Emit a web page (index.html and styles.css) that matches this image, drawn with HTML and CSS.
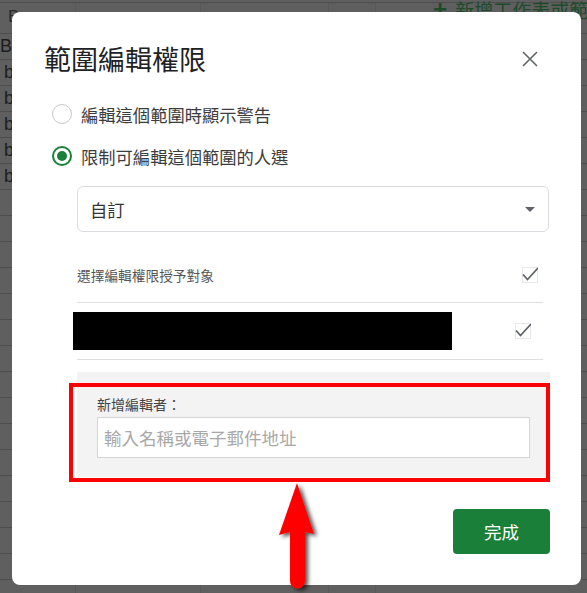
FILE: index.html
```html
<!DOCTYPE html>
<html lang="zh-Hant">
<head>
    <meta charset="UTF-8">
    <meta name="viewport" content="width=device-width, initial-scale=1.0">
    <title>範圍編輯權限</title>
    <link rel="stylesheet" href="styles.css">
</head>
<body>

    <div class="sheet">
        <div class="sheet-head">
            <div class="cell c1">B</div>
            <div class="cell c2"></div>
            <div class="cell c3"></div>
            <div class="cell c4"></div>
            <div class="add-sheet"><span class="plus">+</span>新增工作表或範圍</div>
        </div>
        <div class="row"><div class="cell c1 strong">B:</div><div class="cell c2"></div><div class="cell c3"></div><div class="cell c4"></div></div>
        <div class="row"><div class="cell c1">b</div><div class="cell c2"></div><div class="cell c3"></div><div class="cell c4"></div></div>
        <div class="row"><div class="cell c1">b</div><div class="cell c2"></div><div class="cell c3"></div><div class="cell c4"></div></div>
        <div class="row"><div class="cell c1">b</div><div class="cell c2"></div><div class="cell c3"></div><div class="cell c4"></div></div>
        <div class="row"><div class="cell c1">b</div><div class="cell c2"></div><div class="cell c3"></div><div class="cell c4"></div></div>
        <div class="row"><div class="cell c1">b</div><div class="cell c2"></div><div class="cell c3"></div><div class="cell c4"></div></div>
        <div class="row"><div class="cell c1"></div><div class="cell c2"></div><div class="cell c3"></div><div class="cell c4"></div></div>
        <div class="row"><div class="cell c1"></div><div class="cell c2"></div><div class="cell c3"></div><div class="cell c4"></div></div>
        <div class="row"><div class="cell c1"></div><div class="cell c2"></div><div class="cell c3"></div><div class="cell c4"></div></div>
        <div class="row"><div class="cell c1"></div><div class="cell c2"></div><div class="cell c3"></div><div class="cell c4"></div></div>
        <div class="row"><div class="cell c1"></div><div class="cell c2"></div><div class="cell c3"></div><div class="cell c4"></div></div>
        <div class="row"><div class="cell c1"></div><div class="cell c2"></div><div class="cell c3"></div><div class="cell c4"></div></div>
        <div class="row"><div class="cell c1"></div><div class="cell c2"></div><div class="cell c3"></div><div class="cell c4"></div></div>
        <div class="row"><div class="cell c1"></div><div class="cell c2"></div><div class="cell c3"></div><div class="cell c4"></div></div>
        <div class="row"><div class="cell c1"></div><div class="cell c2"></div><div class="cell c3"></div><div class="cell c4"></div></div>
        <div class="row"><div class="cell c1"></div><div class="cell c2"></div><div class="cell c3"></div><div class="cell c4"></div></div>
        <div class="row"><div class="cell c1"></div><div class="cell c2"></div><div class="cell c3"></div><div class="cell c4"></div></div>
        <div class="row"><div class="cell c1"></div><div class="cell c2"></div><div class="cell c3"></div><div class="cell c4"></div></div>
        <div class="row"><div class="cell c1"></div><div class="cell c2"></div><div class="cell c3"></div><div class="cell c4"></div></div>
        <div class="row"><div class="cell c1"></div><div class="cell c2"></div><div class="cell c3"></div><div class="cell c4"></div></div>
        <div class="row"><div class="cell c1"></div><div class="cell c2"></div><div class="cell c3"></div><div class="cell c4"></div></div>
        <div class="row"><div class="cell c1"></div><div class="cell c2"></div><div class="cell c3"></div><div class="cell c4"></div></div>
    </div>

    <div class="dialog">
        <div class="dialog-head">
            <h2 class="dialog-title">範圍編輯權限</h2>
            <button class="close-btn" aria-label="關閉">
                <svg width="20" height="20" viewBox="0 0 20 20"><path d="M3 3L17 17M17 3L3 17" stroke="#5f6368" stroke-width="1.6" fill="none"/></svg>
            </button>
        </div>

        <div class="options">
            <label class="option">
                <span class="radio"></span>
                <span>編輯這個範圍時顯示警告</span>
            </label>
            <label class="option">
                <span class="radio checked"></span>
                <span>限制可編輯這個範圍的人選</span>
            </label>
        </div>

        <div class="content">
            <div class="select">
                <span>自訂</span>
                <span class="caret"></span>
            </div>

            <div class="people">
                <div class="person head">
                    <span>選擇編輯權限授予對象</span>
                    <span class="check">
                        <svg width="16" height="16" viewBox="0 0 16 16"><path d="M1 7.5L5.5 12.5L16 1" stroke="#5f6368" stroke-width="1.8" fill="none"/></svg>
                    </span>
                </div>
                <div class="person">
                    <span class="redacted"></span>
                    <span class="check">
                        <svg width="16" height="16" viewBox="0 0 16 16"><path d="M1 7.5L5.5 12.5L16 1" stroke="#5f6368" stroke-width="1.8" fill="none"/></svg>
                    </span>
                </div>
            </div>

            <div class="add-panel">
                <div class="add-label">新增編輯者：</div>
                <input class="add-input" type="text" placeholder="輸入名稱或電子郵件地址">
            </div>

            <div class="actions">
                <button class="done-btn">完成</button>
            </div>
        </div>
    </div>

    <div class="highlight"></div>
    <svg class="arrow" width="60" height="115" viewBox="0 0 60 115">
        <defs>
            <filter id="shadow" x="-30%" y="-10%" width="180%" height="130%">
                <feDropShadow dx="3" dy="2" stdDeviation="2" flood-color="#000" flood-opacity="0.7"/>
            </filter>
        </defs>
        <path d="M27 5L44 56L35 54L35 103A7.5 7.5 0 0 1 20 103L20 54L9 57Z" fill="#ff0000" filter="url(#shadow)"/>
    </svg>

</body>
</html>
```

FILE: styles.css
```css
body {
    margin: 0;
    background: #5f5f5f;
    font-family: "Noto Sans CJK TC", "Noto Sans", sans-serif;
    overflow: hidden;
    height: 593px;
}
.sheet {
    color: #1c1c1c;
    font-family: "Liberation Sans", Arial, sans-serif;
    font-size: 18px;
}
.sheet-head {
    display: flex;
    height: 32px;
    box-sizing: border-box;
    border-top: 1px solid #4e4e4e;
    border-bottom: 1px solid #4e4e4e;
    margin-top: 2px;
}
.sheet-head .cell {
    height: 30px;
    line-height: 28px;
    padding-left: 8px;
    color: #2a2a2a;
    font-size: 17px;
}
.row {
    display: flex;
    height: 26px;
    box-sizing: border-box;
    border-bottom: 1px solid #4e4e4e;
}
.cell {
    flex-shrink: 0;
    box-sizing: border-box;
    border-right: 1px solid #575757;
    line-height: 25px;
    padding-left: 4px;
}
.strong {
    padding-left: 0;
}
.c1 { width: 76px; }
.c2 { width: 125px; }
.c3 { width: 128px; }
.c4 { width: 47px; }
.add-sheet {
    flex-shrink: 0;
    margin-left: 57px;
    margin-top: -13px;
    font-family: "Noto Sans CJK TC", sans-serif;
    color: #1d4b2a;
    font-size: 19px;
    white-space: nowrap;
}
.add-sheet .plus {
    font-weight: bold;
    font-size: 24px;
    margin-right: 8px;
}

.dialog {
    position: absolute;
    left: 12px;
    top: 12px;
    width: 569px;
    height: 573px;
    box-sizing: border-box;
    background: #fff;
    border-radius: 8px;
}
.dialog-head {
    display: flex;
    justify-content: space-between;
    align-items: center;
    padding: 31px 41px 0 32px;
}
.dialog-title {
    margin: 0;
    font-size: 27px;
    line-height: 32px;
    font-weight: 400;
    color: #202124;
}
.close-btn {
    width: 20px;
    height: 20px;
    padding: 0;
    border: none;
    background: none;
    cursor: pointer;
}
.options {
    margin-top: 18px;
    padding-left: 40px;
}
.option {
    display: flex;
    align-items: center;
    gap: 9px;
    height: 42px;
    font-size: 17.3px;
    color: #3c3c3c;
}
.radio {
    width: 20px;
    height: 20px;
    box-sizing: border-box;
    border: 1.5px solid #c8c8c8;
    border-radius: 50%;
    display: flex;
    align-items: center;
    justify-content: center;
}
.radio.checked {
    border: 2px solid #188038;
}
.radio.checked::after {
    content: "";
    width: 10px;
    height: 10px;
    border-radius: 50%;
    background: #188038;
}
.content {
    padding: 9px 31px 0 65px;
}
.select {
    display: flex;
    justify-content: space-between;
    align-items: center;
    height: 46px;
    box-sizing: border-box;
    border: 1px solid #dadce0;
    border-radius: 6px;
    padding: 0 13px 0 12px;
    font-size: 17.3px;
    color: #333;
    margin-right: 1px;
}
.caret {
    width: 0;
    height: 0;
    border-left: 5px solid transparent;
    border-right: 5px solid transparent;
    border-top: 5px solid #5f6368;
}
.people {
    margin-right: 7px;
}
.person {
    display: flex;
    justify-content: space-between;
    align-items: center;
    border-bottom: 1px solid #dedede;
    padding: 9px 12px 9px 0;
}
.person.head {
    padding: 33px 5px 17px 0;
    font-size: 13.7px;
    line-height: 20px;
    color: #555;
}
.redacted {
    display: block;
    width: 379px;
    height: 38px;
    margin-left: -4px;
    background: #000;
}
.check {
    display: block;
    width: 16px;
    height: 16px;
    box-sizing: border-box;
    border: 1px solid #e8e8e8;
}
.check svg {
    display: block;
    margin: -1px;
}
.add-panel {
    margin-top: 12px;
    background: #f3f3f3;
    padding: 22px 20px 19px 20px;
}
.add-label {
    font-size: 14px;
    line-height: 20px;
    color: #444;
    margin-bottom: 3px;
}
.add-input {
    display: block;
    width: 100%;
    height: 41px;
    box-sizing: border-box;
    border: 1px solid #d5d5d5;
    padding: 0 6px;
    font-family: "Noto Sans CJK TC", sans-serif;
    font-size: 17.5px;
    color: #333;
    background: #fff;
    outline: none;
}
.add-input::placeholder {
    color: #a8a8a8;
}
.actions {
    display: flex;
    justify-content: flex-end;
    margin-top: 32px;
}
.done-btn {
    width: 97px;
    height: 45px;
    border: none;
    border-radius: 4px;
    background: #1a8039;
    color: #fff;
    font-family: "Noto Sans CJK TC", sans-serif;
    font-size: 17.5px;
    cursor: pointer;
}

/* annotation overlay */
.highlight {
    position: absolute;
    left: 69px;
    top: 383px;
    width: 481px;
    height: 99px;
    box-sizing: border-box;
    border: 4px solid #ff0000;
}
.arrow {
    position: absolute;
    left: 270px;
    top: 478px;
}
```
